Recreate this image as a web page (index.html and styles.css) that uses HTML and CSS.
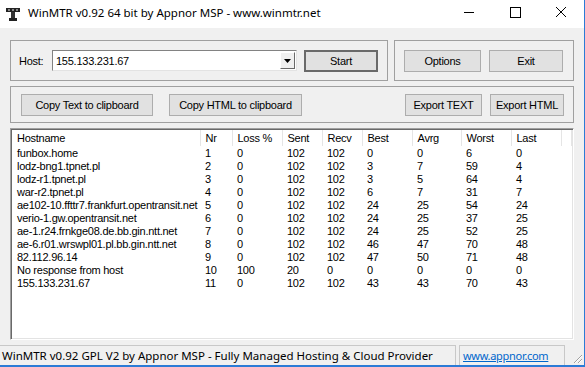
FILE: index.html
```html
<!DOCTYPE html>
<html lang="en">
<head>
    <meta charset="UTF-8">
    <title>WinMTR</title>
    <link rel="stylesheet" href="styles.css">
</head>
<body>
<div class="window">
    <div class="titlebar">
        <svg class="app-icon" width="16" height="16" viewBox="0 0 16 16">
            <rect x="1" y="2" width="14" height="4" fill="#222"/>
            <rect x="3" y="3" width="2" height="2" fill="#888"/>
            <rect x="7" y="3" width="2" height="2" fill="#888"/>
            <rect x="11" y="3" width="2" height="2" fill="#888"/>
            <rect x="6" y="6" width="4" height="7" fill="#333"/>
            <rect x="4" y="12" width="8" height="3" fill="#222"/>
        </svg>
        <div class="title">WinMTR v0.92 64 bit by Appnor MSP - www.winmtr.net</div>
        <div class="caption-btn">
            <svg width="12" height="12" viewBox="0 0 12 12"><line x1="1" y1="6.5" x2="11" y2="6.5" stroke="#000" stroke-width="1"/></svg>
        </div>
        <div class="caption-btn">
            <svg width="12" height="12" viewBox="0 0 12 12"><rect x="1.5" y="1.5" width="10" height="10" fill="none" stroke="#000" stroke-width="1"/></svg>
        </div>
        <div class="caption-btn">
            <svg width="12" height="12" viewBox="0 0 12 12"><path d="M1 1 L11 11 M11 1 L1 11" stroke="#000" stroke-width="1"/></svg>
        </div>
    </div>

    <div class="client">
        <div class="row-top">
            <div class="group group-host">
                <span class="host-label">Host:</span>
                <div class="combo">
                    <span class="combo-text">155.133.231.67</span>
                    <span class="combo-drop">
                        <svg width="7" height="4" viewBox="0 0 7 4"><path d="M0 0 H7 L3.5 4 Z" fill="#000"/></svg>
                    </span>
                </div>
                <button class="btn btn-default btn-start">Start</button>
            </div>
            <div class="group group-opts">
                <button class="btn btn-options">Options</button>
                <button class="btn btn-exit">Exit</button>
            </div>
        </div>

        <div class="group group-export">
            <button class="btn btn-copy-text">Copy Text to clipboard</button>
            <button class="btn btn-copy-html">Copy HTML to clipboard</button>
            <button class="btn btn-export-text">Export TEXT</button>
            <button class="btn btn-export-html">Export HTML</button>
        </div>

        <div class="listview">
            <table class="hops">
                <colgroup>
                    <col style="width:188px">
                    <col style="width:32px">
                    <col style="width:50px">
                    <col style="width:40px">
                    <col style="width:40px">
                    <col style="width:50px">
                    <col style="width:49px">
                    <col style="width:50px">
                    <col style="width:50px">
                    <col>
                </colgroup>
                <thead>
                <tr>
                    <th>Hostname</th><th>Nr</th><th>Loss %</th><th>Sent</th><th>Recv</th>
                    <th>Best</th><th>Avrg</th><th>Worst</th><th>Last</th><th></th>
                </tr>
                </thead>
                <tbody id="hopRows"></tbody>
            </table>
        </div>
    </div>

    <div class="statusbar">
        <div class="pane pane-main">WinMTR v0.92 GPL V2 by Appnor MSP - Fully Managed Hosting &amp; Cloud Provider</div>
        <div class="pane pane-link"><a href="#">www.appnor.com</a></div>
        <svg class="grip" width="12" height="12" viewBox="0 0 12 12">
            <path d="M11 3 L3 11 M11 7 L7 11" stroke="#a0a0a0" stroke-width="1"/>
            <path d="M11 4 L4 11 M11 8 L8 11" stroke="#fff" stroke-width="1"/>
        </svg>
    </div>
</div>
<script>
    // hop data: host, nr, loss, sent, recv, best, avrg, worst, last
    const hops = [
        ['funbox.home', 1, 0, 102, 102, 0, 0, 6, 0],
        ['lodz-bng1.tpnet.pl', 2, 0, 102, 102, 3, 7, 59, 4],
        ['lodz-r1.tpnet.pl', 3, 0, 102, 102, 3, 5, 64, 4],
        ['war-r2.tpnet.pl', 4, 0, 102, 102, 6, 7, 31, 7],
        ['ae102-10.ffttr7.frankfurt.opentransit.net', 5, 0, 102, 102, 24, 25, 54, 24],
        ['verio-1.gw.opentransit.net', 6, 0, 102, 102, 24, 25, 37, 25],
        ['ae-1.r24.frnkge08.de.bb.gin.ntt.net', 7, 0, 102, 102, 24, 25, 52, 25],
        ['ae-6.r01.wrswpl01.pl.bb.gin.ntt.net', 8, 0, 102, 102, 46, 47, 70, 48],
        ['82.112.96.14', 9, 0, 102, 102, 47, 50, 71, 48],
        ['No response from host', 10, 100, 20, 0, 0, 0, 0, 0],
        ['155.133.231.67', 11, 0, 102, 102, 43, 43, 70, 43]
    ];
    const tbody = document.getElementById('hopRows');
    hops.forEach(h => {
        const tr = document.createElement('tr');
        h.concat(['']).forEach(v => {
            const td = document.createElement('td');
            td.textContent = v;
            tr.appendChild(td);
        });
        tbody.appendChild(tr);
    });
</script>
</body>
</html>
```

FILE: styles.css
```css
body {
    margin: 0;
    width: 585px;
    height: 367px;
    overflow: hidden;
    background-color: #f0f0f0;
}
.window {
    display: flex;
    flex-direction: column;
    height: 367px;
    box-sizing: border-box;
    border-right: 1px solid #2b7bd6;
    border-bottom: 2px solid #2b7bd6;
}
.titlebar {
    height: 28px;
    flex-shrink: 0;
    background-color: #fff;
    display: flex;
    align-items: center;
}
.app-icon {
    margin-left: 5px;
    margin-top: -1px;
}
.title {
    margin-left: 7px;
    flex: 1;
    font-family: "Noto Sans", sans-serif;
    font-size: 11.5px;
    color: #000;
    margin-top: -3px;
}
.caption-btn {
    width: 46px;
    height: 28px;
    display: flex;
    align-items: center;
    justify-content: center;
    margin-top: -4px;
}
.client {
    flex: 1;
    display: flex;
    flex-direction: column;
    gap: 5px;
    padding: 12px 10px 0 10px;
    font-family: "Liberation Sans", Arial, sans-serif;
    font-size: 11px;
    letter-spacing: -0.25px;
}
.row-top {
    display: flex;
    gap: 6px;
}
.group {
    border: 1px solid #a0a0a0;
    box-sizing: border-box;
    display: flex;
    align-items: center;
}
.group-host {
    width: 378px;
    height: 41px;
    padding-left: 8px;
}
.group-opts {
    flex: 1;
    height: 41px;
    padding-left: 9px;
    gap: 8px;
}
.host-label {
    width: 33px;
}
.combo {
    width: 245px;
    height: 21px;
    box-sizing: border-box;
    background-color: #fff;
    border: 1px solid #828282;
    border-right-color: #e3e3e3;
    border-bottom-color: #e3e3e3;
    display: flex;
    align-items: center;
    margin-right: 7px;
}
.combo-text {
    flex: 1;
    padding-left: 3px;
}
.combo-drop {
    width: 15px;
    height: 17px;
    box-sizing: border-box;
    margin-right: 1px;
    background-color: #f0f0f0;
    border: 1px solid #fff;
    border-right-color: #696969;
    border-bottom-color: #696969;
    display: flex;
    align-items: center;
    justify-content: center;
}
.btn {
    height: 22px;
    box-sizing: border-box;
    background-color: #e1e1e1;
    border: 1px solid #adadad;
    padding: 0;
    font-family: "Liberation Sans", Arial, sans-serif;
    font-size: 11px;
    letter-spacing: -0.25px;
    color: #000;
}
.btn-default {
    border: 2px solid #6a6a6a;
}
.btn-start { width: 74px; }
.btn-options { width: 77px; }
.btn-exit { width: 74px; }
.group-export {
    height: 37px;
    padding-left: 10px;
    padding-right: 9px;
}
.btn-copy-text { width: 132px; }
.btn-copy-html { width: 133px; margin-left: 16px; }
.btn-export-text { width: 77px; margin-left: auto; }
.btn-export-html { width: 74px; margin-left: 8px; }
.listview {
    flex: 1;
    margin-bottom: 3px;
    background-color: #fff;
    border: 1px solid #a0a0a0;
    border-right-color: #fff;
    border-bottom-color: #fff;
    box-shadow: inset 1px 1px 0 #696969, inset -1px -1px 0 #e3e3e3;
    padding: 1px;
    overflow: hidden;
}
.hops {
    border-collapse: collapse;
    table-layout: fixed;
    width: 100%;
}
.hops th {
    height: 16px;
    font-weight: normal;
    text-align: left;
    padding: 0 0 0 5px;
    border-right: 1px solid #e5e5e5;
    white-space: nowrap;
    overflow: hidden;
}
.hops td {
    height: 13px;
    line-height: 13px;
    padding: 0 0 0 5px;
    white-space: nowrap;
    overflow: hidden;
}
.hops tbody tr:first-child td {
    padding-top: 1px;
}
.statusbar {
    height: 22px;
    flex-shrink: 0;
    display: flex;
    align-items: flex-end;
    font-family: "Noto Sans", sans-serif;
    font-size: 11.5px;
    position: relative;
}
.pane {
    height: 20px;
    box-sizing: border-box;
    border-top: 1px solid #c8c8c8;
    display: flex;
    align-items: center;
}
.pane-main {
    width: 456px;
    padding-left: 2px;
    border-right: 1px solid #c8c8c8;
}
.pane-link {
    width: 106px;
    margin-left: 3px;
    padding-left: 3px;
    border-left: 1px solid #c8c8c8;
    border-right: 1px solid #c8c8c8;
    overflow: hidden;
    white-space: nowrap;
}
.pane-link a {
    color: #0066cc;
    font-size: 11px;
    letter-spacing: -0.3px;
}
.grip {
    position: absolute;
    right: 1px;
    bottom: 1px;
}
```
